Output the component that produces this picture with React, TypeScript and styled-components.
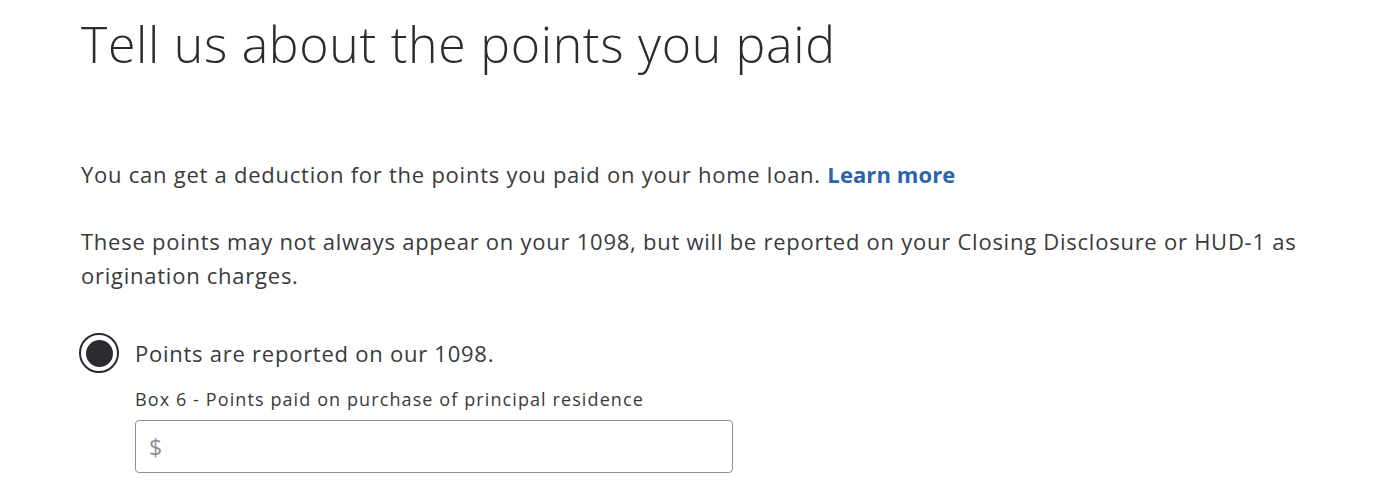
import React from "react";
import styled, { createGlobalStyle } from "styled-components";

const GlobalStyle = createGlobalStyle`
  body {
    margin: 0;
    background: #fff;
    font-family: "Open Sans", "Noto Sans", sans-serif;
    color: #393a3d;
  }
`;

const Page = styled.div`
  padding: 12px 0 0 81px;
  width: 1240px;
`;

const Title = styled.h1`
  margin: 0 0 81px;
  font-size: 50px;
  font-weight: 300;
  letter-spacing: 0.7px;
  line-height: 64px;
  color: #2a2b2e;
`;

const Text = styled.p`
  margin: 0 0 33px;
  font-size: 22px;
  letter-spacing: 0.75px;
  line-height: 34px;
`;

const Link = styled.a`
  color: #2d62ad;
  font-weight: 700;
  letter-spacing: 0.1px;
  text-decoration: none;
`;

const Option = styled.label`
  display: flex;
  align-items: center;
  gap: 16px;
  margin: 41px 0 0 -2px;
  height: 40px;
  font-size: 22px;
  letter-spacing: 0.75px;
`;

const RadioRing = styled.span`
  width: 36px;
  height: 36px;
  border: 2px solid #2a2b2e;
  border-radius: 50%;
  display: flex;
  align-items: center;
  justify-content: center;
`;

const RadioDot = styled.span`
  width: 27px;
  height: 27px;
  border-radius: 50%;
  background: #2a2b2e;
`;

const Field = styled.div`
  margin: 14px 0 0 54px;
  display: flex;
  flex-direction: column;
  gap: 9px;
`;

const FieldLabel = styled.span`
  font-size: 18px;
  letter-spacing: 1.1px;
  line-height: 24px;
`;

const InputBox = styled.div`
  width: 598px;
  height: 53px;
  border: 1px solid #8d9096;
  border-radius: 4px;
  display: flex;
  align-items: center;
  padding-left: 13px;
  box-sizing: border-box;
  font-size: 23px;
  color: #8d9096;
`;

export default function App() {
  return (
    <>
      <GlobalStyle />
      <Page>
        <Title>Tell us about the points you paid</Title>
        <Text>
          You can get a deduction for the points you paid on your home loan.{" "}
          <Link href="#">Learn more</Link>
        </Text>
        <Text>
          These points may not always appear on your 1098, but will be reported on your Closing
          Disclosure or HUD-1 as origination charges.
        </Text>
        <Option>
          <RadioRing>
            <RadioDot />
          </RadioRing>
          Points are reported on our 1098.
        </Option>
        <Field>
          <FieldLabel>Box 6 - Points paid on purchase of principal residence</FieldLabel>
          <InputBox>$</InputBox>
        </Field>
      </Page>
    </>
  );
}
